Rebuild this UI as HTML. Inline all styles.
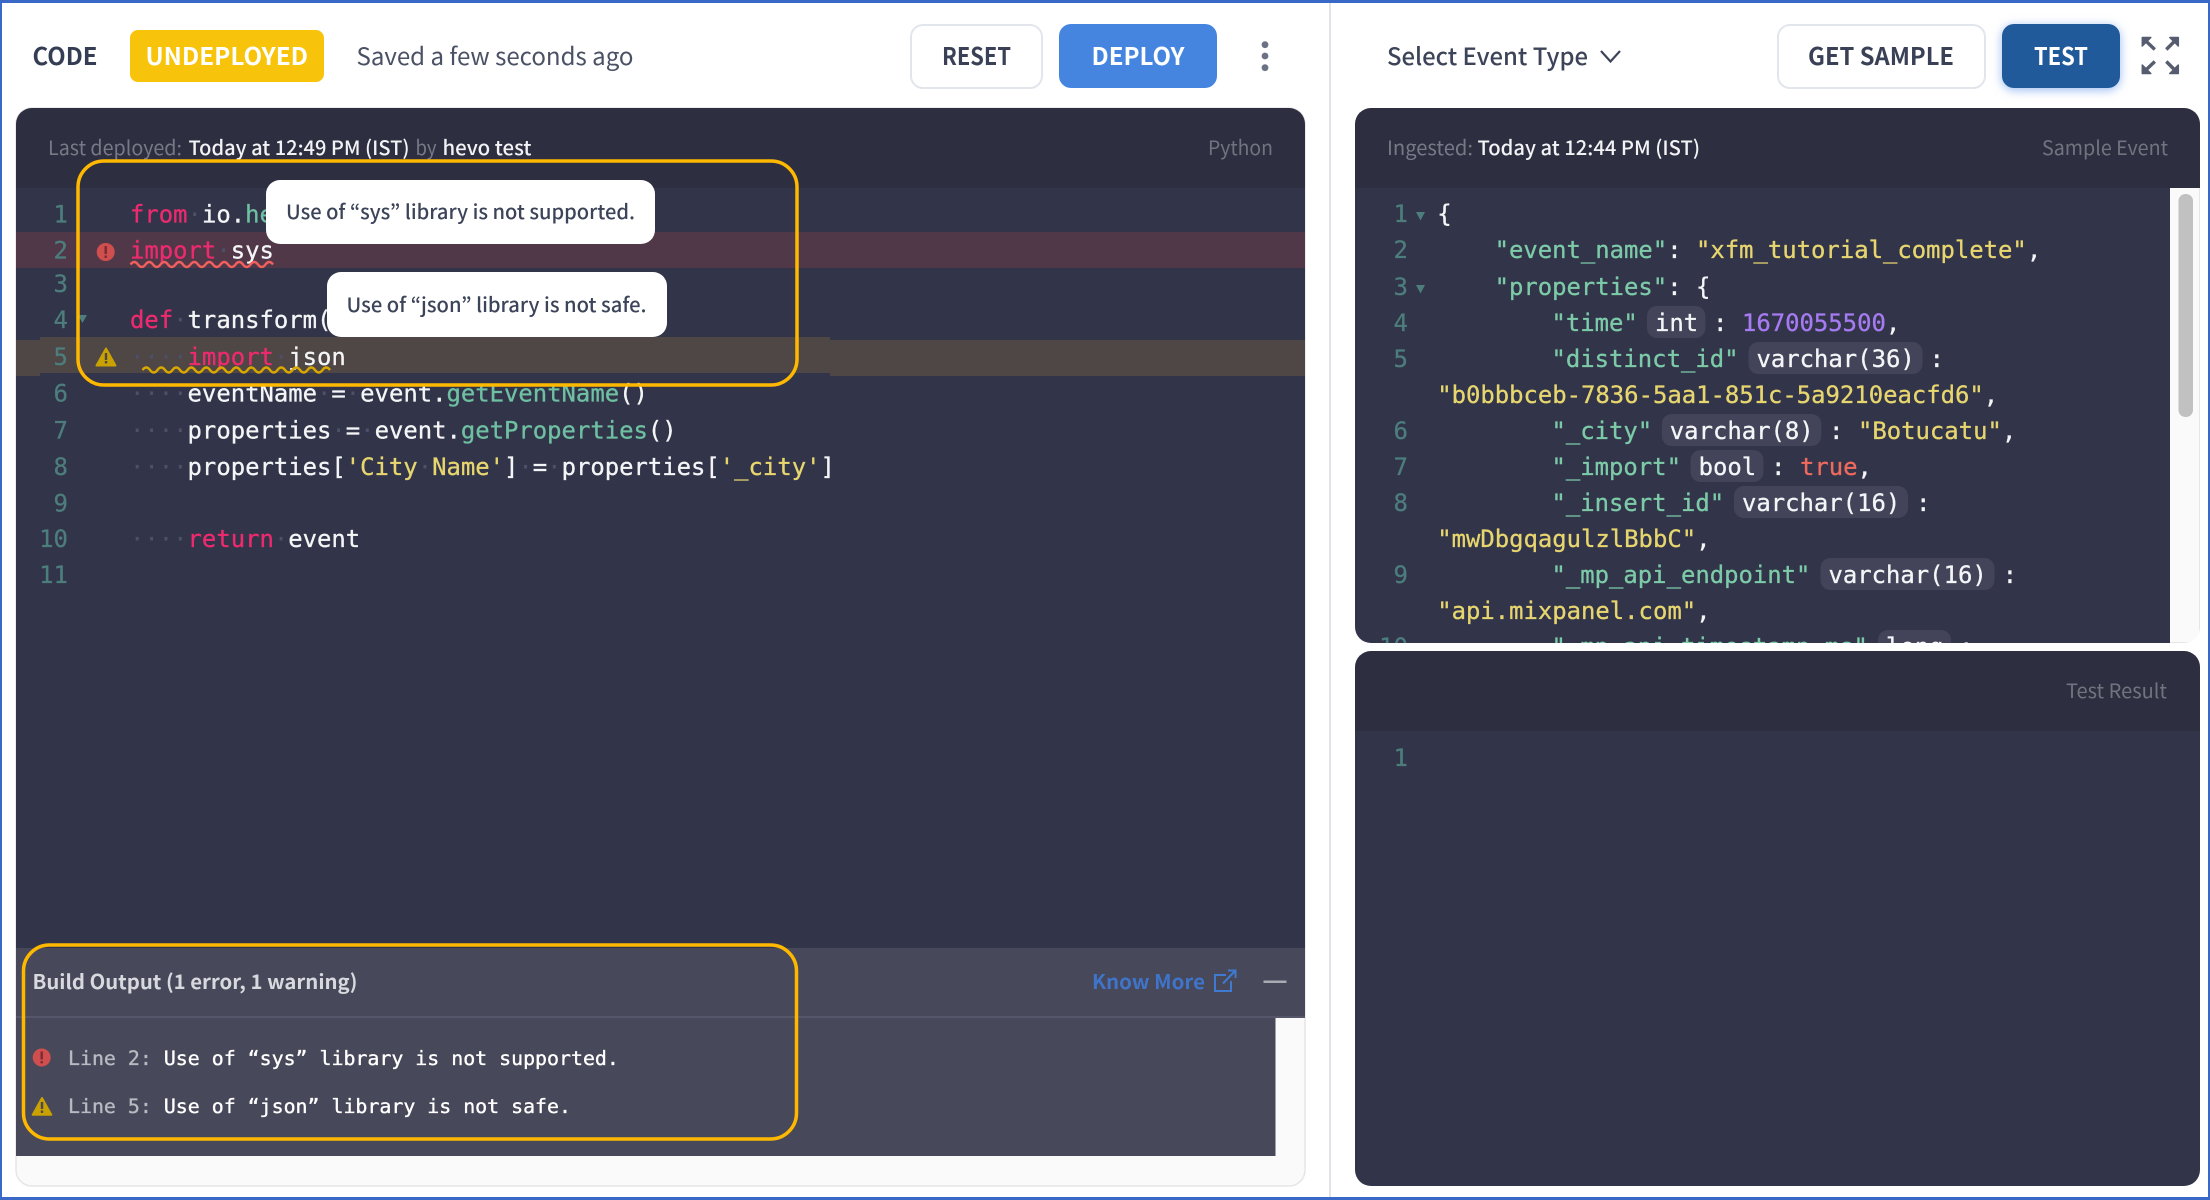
<!DOCTYPE html>
<html lang="en"><head><meta charset="utf-8"><title>Code editor</title>
<style>
html,body{margin:0;padding:0;background:#fff;width:2210px;height:1200px;overflow:hidden}
svg{display:block}
.s{font-family:"Noto Sans CJK JP","Liberation Sans",sans-serif}
.b{font-weight:700}.m{font-weight:500}
.h{font-size:24px}.t{font-size:20px}
.c{font-family:"DejaVu Sans Mono","Liberation Mono",monospace;font-size:23.9px;fill:#f4f5f7;stroke:#f4f5f7;stroke-width:.3px}
.n{font-family:"DejaVu Sans Mono","Liberation Mono",monospace;font-size:24px;fill:#4d7d7c;stroke:#4d7d7c;stroke-width:.25px;text-anchor:end}
.o{font-family:"DejaVu Sans Mono","Liberation Mono",monospace;font-size:19.9px;fill:#fff;stroke:#fff;stroke-width:.35px}
.p{fill:#ee2a6f;stroke:#ee2a6f}.d{fill:#4d5066;stroke:none}.g{fill:#6fc0a2;stroke:#6fc0a2}.y{fill:#e7d66f;stroke:#e7d66f}.r{fill:#ee6a5e;stroke:#ee6a5e}.v{fill:#a67bf2;stroke:#a67bf2}.l{fill:#b8bac2;stroke:#b8bac2}
.k{fill:#7ccaa8;stroke:#7ccaa8}.w{fill:#f4f5f7;stroke:#f4f5f7}
.pill{fill:#43445a}
</style></head><body>
<svg width="2210" height="1200" viewBox="0 0 2210 1200" xmlns="http://www.w3.org/2000/svg">
<defs>
<clipPath id="rc"><rect x="1355" y="108" width="845" height="535" rx="16"/></clipPath>
<clipPath id="lt"><rect x="16" y="108" width="1289" height="1078" rx="16"/></clipPath>
<clipPath id="rb"><rect x="1355" y="651" width="845" height="535" rx="16"/></clipPath>
</defs>
<rect width="2210" height="1200" fill="#fff"/>
<rect x="1329" y="3" width="2" height="1194" fill="#e3e4ea"/>

<!-- toolbar left -->
<text class="s b h" x="32.500" y="65" fill="#343d54" textLength="65" lengthAdjust="spacingAndGlyphs">CODE</text>
<rect x="130" y="30" width="194" height="52" rx="8" fill="#f7c40b"/>
<text class="s b h" x="145.500" y="65" fill="#fff" textLength="162.500" lengthAdjust="spacingAndGlyphs">UNDEPLOYED</text>
<text class="s h" x="356.500" y="65" fill="#4a5164" textLength="277" lengthAdjust="spacingAndGlyphs">Saved a few seconds ago</text>
<rect x="911" y="25" width="131" height="63" rx="12" fill="#fff" stroke="#e2e6ec" stroke-width="2"/>
<text class="s b h" x="942" y="65" fill="#3a4156" textLength="69" lengthAdjust="spacingAndGlyphs">RESET</text>
<rect x="1059" y="24" width="158" height="64" rx="12" fill="#4585e0"/>
<text class="s b h" x="1091.500" y="65" fill="#fff" textLength="93" lengthAdjust="spacingAndGlyphs">DEPLOY</text>
<circle cx="1265" cy="44.700" r="3.400" fill="#6b7285"/><circle cx="1265" cy="56" r="3.400" fill="#6b7285"/><circle cx="1265" cy="67.700" r="3.400" fill="#6b7285"/>

<!-- toolbar right -->
<text class="s m h" x="1387" y="65" fill="#3d4459" textLength="201" lengthAdjust="spacingAndGlyphs">Select Event Type</text>
<path d="M1601 51l9.500 10.500L1620 51" fill="none" stroke="#3d4459" stroke-width="2.200"/>
<rect x="1778" y="25" width="207" height="63" rx="12" fill="#fff" stroke="#e2e6ec" stroke-width="2"/>
<text class="s b h" x="1808" y="65" fill="#3a4156" textLength="146" lengthAdjust="spacingAndGlyphs">GET SAMPLE</text>
<rect x="2002" y="24" width="118" height="64" rx="12" fill="#205a9a" style="filter:drop-shadow(0 2px 5px rgba(70,130,230,.55))"/>
<text class="s b h" x="2034" y="65" fill="#fff" textLength="54" lengthAdjust="spacingAndGlyphs">TEST</text>
<g transform="translate(.8 0)">
<g fill="#565d70" stroke="#565d70" stroke-width="1.500" stroke-linejoin="round">
<path d="M2141.500 37.500h8.500l-8.500 8.500z"/><path d="M2177.500 37.500h-8.500l8.500 8.500z"/><path d="M2141.500 73.500h8.500l-8.500-8.500z"/><path d="M2177.500 73.500h-8.500l8.500-8.500z"/>
</g>
<g stroke="#565d70" stroke-width="3.400" fill="none">
<path d="M2144 40l10 9.500M2175 40l-9.500 9.500M2144 71l10-9.500M2175 71l-9.500-9.500"/>
</g>
</g>

<!-- left panel -->
<rect x="16" y="108" width="1289" height="1078" rx="16" fill="#fafafa" stroke="#e6e6e6" stroke-width="1.500"/>
<g clip-path="url(#lt)">
<rect x="16" y="108" width="1289" height="80" fill="#2d2e40"/>
<rect x="16" y="188" width="1289" height="760" fill="#323549"/>
<rect x="16" y="232" width="1289" height="36" fill="#513849"/>
<rect x="16" y="340" width="1289" height="36" fill="#4f4646"/>
<rect x="40" y="337" width="790" height="36" fill="#4f4646"/>
<rect x="40" y="373" width="790" height="3" fill="#323549"/>
<rect x="16" y="948" width="1289" height="68" fill="#474859"/>
<rect x="16" y="1016" width="1289" height="2" fill="#55566a"/>
<rect x="16" y="1018" width="1259.500" height="138" fill="#474859"/>
</g>
<text class="s t" x="48" y="155" fill="#777987" textLength="134" lengthAdjust="spacingAndGlyphs">Last deployed:</text>
<text class="s m t" x="188.500" y="155" fill="#f2f3f5" textLength="221" lengthAdjust="spacingAndGlyphs">Today at 12:49 PM (IST)</text>
<text class="s t" x="415.500" y="155" fill="#777987" textLength="21" lengthAdjust="spacingAndGlyphs">by</text>
<text class="s m t" x="442.500" y="155" fill="#f2f3f5" textLength="89" lengthAdjust="spacingAndGlyphs">hevo test</text>
<text class="s t" x="1208" y="155" fill="#71737f" textLength="65" lengthAdjust="spacingAndGlyphs">Python</text>

<!-- left code -->
<text class="n" x="68" y="222.500">1</text><text class="n" x="68" y="258.500">2</text><text class="n" x="68" y="292">3</text><text class="n" x="68" y="328">4</text><text class="n" x="68" y="365">5</text><text class="n" x="68" y="401.500">6</text><text class="n" x="68" y="438.500">7</text><text class="n" x="68" y="475">8</text><text class="n" x="68" y="511.500">9</text><text class="n" x="68" y="547">10</text><text class="n" x="68" y="583">11</text>
<path d="M78 315h9l-4.500 8z" fill="#4d7d7c"/>

<text class="c" x="130" y="222.500"><tspan class="p">from</tspan><tspan class="d">·</tspan>io.<tspan class="g">hevo.api</tspan></text>
<text class="c" x="130" y="258.500"><tspan class="p">import</tspan><tspan class="d">·</tspan>sys</text>
<text class="c" x="130" y="328"><tspan class="p">def</tspan><tspan class="d">·</tspan>transform(event):</text>
<text class="c" x="130" y="365"><tspan class="d">····</tspan><tspan class="p">import</tspan><tspan class="d">·</tspan>json</text>
<text class="c" x="130" y="401.500"><tspan class="d">····</tspan>eventName<tspan class="d">·</tspan>=<tspan class="d">·</tspan>event.<tspan class="g">getEventName</tspan>()</text>
<text class="c" x="130" y="438.500"><tspan class="d">····</tspan>properties<tspan class="d">·</tspan>=<tspan class="d">·</tspan>event.<tspan class="g">getProperties</tspan>()</text>
<text class="c" x="130" y="475"><tspan class="d">····</tspan>properties[<tspan class="y">'City</tspan><tspan class="d">·</tspan><tspan class="y">Name'</tspan>]<tspan class="d">·</tspan>=<tspan class="d">·</tspan>properties[<tspan class="y">'_city'</tspan>]</text>
<text class="c" x="130" y="547"><tspan class="d">····</tspan><tspan class="p">return</tspan><tspan class="d">·</tspan>event</text>

<path d="M130.500 264.500q3.750-5 7.500 0t7.500 0t7.500 0t7.500 0t7.500 0t7.500 0t7.500 0t7.500 0t7.500 0t7.500 0t7.500 0t7.500 0t7.500 0t7.500 0t7.500 0t7.500 0t7.500 0t7.500 0t7.500 0" fill="none" stroke="#f0605e" stroke-width="2.400"/>
<path d="M142.500 370q3.750-5 7.500 0t7.500 0t7.500 0t7.500 0t7.500 0t7.500 0t7.500 0t7.500 0t7.500 0t7.500 0t7.500 0t7.500 0t7.500 0t7.500 0t7.500 0t7.500 0t7.500 0t7.500 0t7.500 0t7.500 0t7.500 0t7.500 0t7.500 0t7.500 0t7.500 0" fill="none" stroke="#d9a800" stroke-width="2.400"/>

<circle cx="105.700" cy="252" r="9" fill="#cf4e4e"/><rect x="104.500" y="246" width="2.400" height="8" fill="#7a2b35"/><rect x="104.500" y="255.500" width="2.400" height="2.400" fill="#7a2b35"/>
<path d="M106 348.500L115.500 365.500H96.500Z" fill="#c9a100" stroke="#c9a100" stroke-width="2" stroke-linejoin="round"/><rect x="104.800" y="353" width="2.400" height="7" fill="#4f4646"/><rect x="104.800" y="361" width="2.400" height="2.400" fill="#4f4646"/>

<!-- tooltips -->
<rect x="266" y="180" width="389" height="64" rx="14" fill="#fff"/>
<text class="s m t" x="286" y="219" fill="#3c4459" textLength="349" lengthAdjust="spacingAndGlyphs">Use of “sys” library is not supported.</text>
<rect x="327" y="272" width="340" height="65" rx="14" fill="#fff"/>
<text class="s m t" x="346.500" y="312" fill="#3c4459" textLength="300" lengthAdjust="spacingAndGlyphs">Use of “json” library is not safe.</text>

<!-- build output -->
<text class="s b t" x="32.500" y="989" fill="#d8d9de" textLength="325" lengthAdjust="spacingAndGlyphs">Build Output (1 error, 1 warning)</text>
<text class="s b t" x="1092" y="989" fill="#3f74c9" textLength="113" lengthAdjust="spacingAndGlyphs">Know More</text>
<path d="M1226 975h-11v16h16v-10M1223 983.500L1235 971M1228 970.500h7.500v7.500" fill="none" stroke="#3f7ad0" stroke-width="2"/>
<rect x="1263.500" y="980.500" width="23" height="2.500" fill="#a9aab3"/>
<circle cx="41.700" cy="1057.500" r="9" fill="#cf4e4e"/><rect x="40.500" y="1051.500" width="2.400" height="8" fill="#7a2b35"/><rect x="40.500" y="1061" width="2.400" height="2.400" fill="#7a2b35"/>
<path d="M42 1098L51.300 1114.700H32.700Z" fill="#c9a100" stroke="#c9a100" stroke-width="2" stroke-linejoin="round"/><rect x="40.800" y="1102" width="2.400" height="7" fill="#474859"/><rect x="40.800" y="1110.500" width="2.400" height="2.400" fill="#474859"/>
<text class="o" x="68" y="1065"><tspan class="l">Line 2: </tspan>Use of “sys” library is not supported.</text>
<text class="o" x="68" y="1113"><tspan class="l">Line 5: </tspan>Use of “json” library is not safe.</text>

<!-- annotation boxes -->
<rect x="78" y="161" width="719" height="224" rx="26" fill="none" stroke="#ffb800" stroke-width="3.500"/>
<rect x="23.500" y="945" width="773" height="194" rx="26" fill="none" stroke="#ffb800" stroke-width="3.500"/>

<!-- right top panel -->
<g clip-path="url(#rc)">
<rect x="1355" y="108" width="845" height="535" fill="#fafafa"/>
<rect x="1355" y="108" width="845" height="80" fill="#2d2e40"/>
<rect x="1355" y="188" width="815" height="455" fill="#323549"/>
<rect x="2178.500" y="194" width="14.500" height="223" rx="7" fill="#c1c1c1"/>
<rect x="2199" y="188" width="1" height="455" fill="#e6e6e6"/>
<rect x="2170" y="642" width="30" height="1" fill="#e6e6e6"/>

<text class="s t" x="1387" y="155" fill="#777987" textLength="86" lengthAdjust="spacingAndGlyphs">Ingested:</text>
<text class="s m t" x="1477.500" y="155" fill="#f2f3f5" textLength="222.500" lengthAdjust="spacingAndGlyphs">Today at 12:44 PM (IST)</text>
<text class="s t" x="2042" y="155" fill="#71737f" textLength="126" lengthAdjust="spacingAndGlyphs">Sample Event</text>

<text class="n" x="1408" y="222">1</text><text class="n" x="1408" y="258">2</text><text class="n" x="1408" y="295">3</text><text class="n" x="1408" y="331">4</text><text class="n" x="1408" y="367">5</text><text class="n" x="1408" y="439">6</text><text class="n" x="1408" y="475">7</text><text class="n" x="1408" y="511">8</text><text class="n" x="1408" y="583">9</text><text class="n" x="1408" y="655">10</text>
<path d="M1416 212h9l-4.500 8.500z" fill="#4d7d7c"/><path d="M1416 285h9l-4.500 8.500z" fill="#4d7d7c"/>

<text class="c" x="1437.200" y="222">{</text>
<text class="c" x="1494.600" y="258"><tspan class="k">"event_name"</tspan>: <tspan class="y">"xfm_tutorial_complete"</tspan>,</text>
<text class="c" x="1494.600" y="295"><tspan class="k">"properties"</tspan>: {</text>

<text class="c k" x="1551.500" y="331">"time"</text>
<rect class="pill" x="1647" y="306" width="58.400" height="32" rx="10"/>
<text class="c" x="1655" y="331">int</text>
<text class="c" x="1713" y="331">:</text>
<text class="c v" x="1742" y="331">1670055500<tspan class="w">,</tspan></text>

<text class="c k" x="1551.500" y="367">"distinct_id"</text>
<rect class="pill" x="1748.500" y="342" width="174" height="32" rx="10"/>
<text class="c" x="1756.500" y="367">varchar(36)</text>
<text class="c" x="1929.600" y="367">:</text>
<text class="c y" x="1437.200" y="403">"b0bbbceb-7836-5aa1-851c-5a9210eacfd6"<tspan class="w">,</tspan></text>

<text class="c k" x="1551.500" y="439">"_city"</text>
<rect class="pill" x="1661.800" y="414" width="159.500" height="32" rx="10"/>
<text class="c" x="1669.800" y="439">varchar(8)</text>
<text class="c" x="1829" y="439">:</text>
<text class="c y" x="1858" y="439">"Botucatu"<tspan class="w">,</tspan></text>

<text class="c k" x="1551.500" y="475">"_import"</text>
<rect class="pill" x="1690.600" y="450" width="72.800" height="32" rx="10"/>
<text class="c" x="1698.600" y="475">bool</text>
<text class="c" x="1771" y="475">:</text>
<text class="c r" x="1800" y="475">true<tspan class="w">,</tspan></text>

<text class="c k" x="1551.500" y="511">"_insert_id"</text>
<rect class="pill" x="1734" y="486" width="174" height="32" rx="10"/>
<text class="c" x="1742" y="511">varchar(16)</text>
<text class="c" x="1916" y="511">:</text>
<text class="c y" x="1437.200" y="547">"mwDbgqagulzlBbbC"<tspan class="w">,</tspan></text>

<text class="c k" x="1551.500" y="583">"_mp_api_endpoint"</text>
<rect class="pill" x="1820.500" y="558" width="174" height="32" rx="10"/>
<text class="c" x="1828.500" y="583">varchar(16)</text>
<text class="c" x="2002.700" y="583">:</text>
<text class="c y" x="1437.200" y="619">"api.mixpanel.com"<tspan class="w">,</tspan></text>

<text class="c k" x="1551.500" y="655">"_mp_api_timestamp_ms"</text>
<rect class="pill" x="1878" y="630" width="73" height="32" rx="10"/>
<text class="c" x="1886" y="655">long</text>
<text class="c" x="1959" y="655">:</text>
</g>

<!-- right bottom panel -->
<g clip-path="url(#rb)">
<rect x="1355" y="651" width="845" height="80" fill="#2d2e40"/>
<rect x="1355" y="731" width="845" height="455" fill="#323549"/>
</g>
<text class="s t" x="2066" y="698" fill="#71737f" textLength="101" lengthAdjust="spacingAndGlyphs">Test Result</text>
<text class="n" x="1408" y="766">1</text>

<!-- outer blue frame -->
<rect x="0" y="0" width="2210" height="3" fill="#3a68c6"/>
<rect x="0" y="1197" width="2210" height="3" fill="#3a68c6"/>
<rect x="0" y="0" width="2" height="1200" fill="#3a68c6"/>
<rect x="2208" y="0" width="2" height="1200" fill="#3a68c6"/>
</svg>
</body></html>
